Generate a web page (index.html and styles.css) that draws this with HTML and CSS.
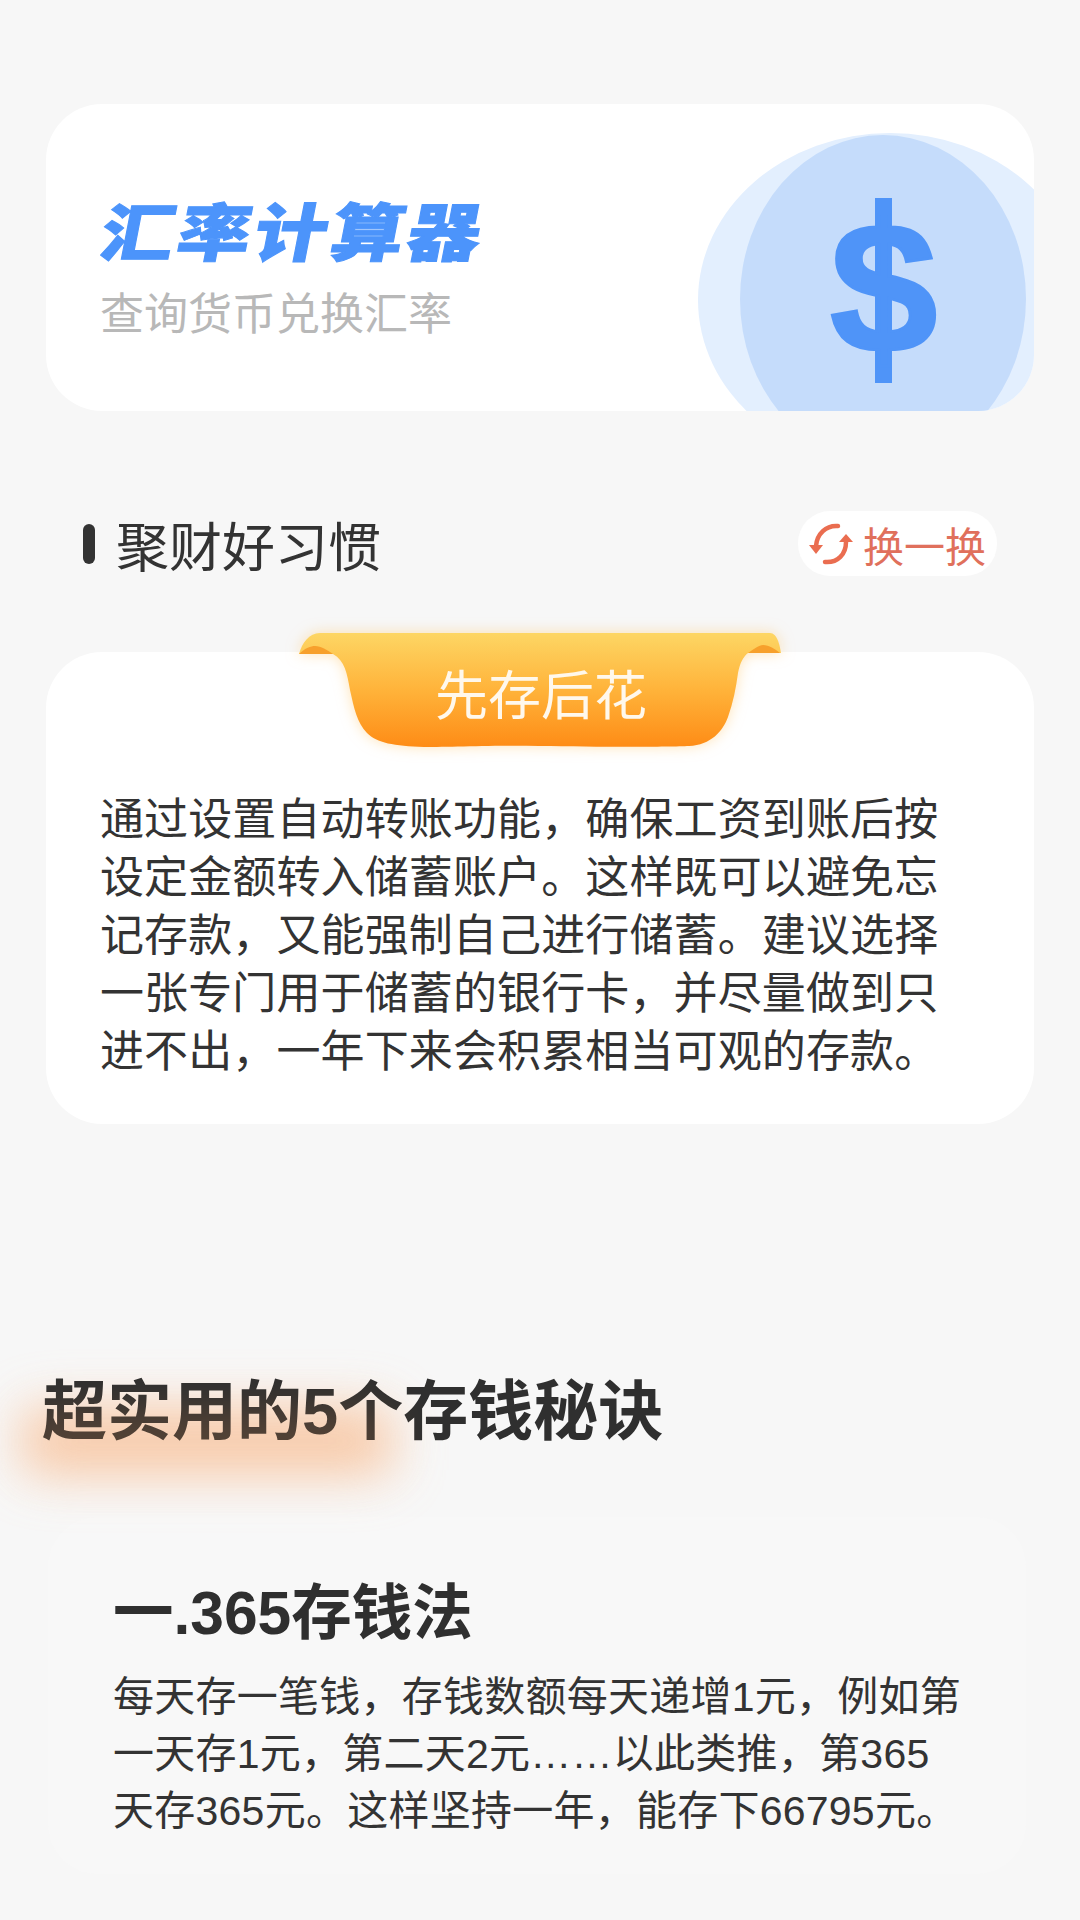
FILE: index.html
```html
<!DOCTYPE html>
<html lang="zh-CN">
<head>
<meta charset="utf-8">
<title>汇率计算器</title>
<link rel="stylesheet" href="styles.css">
</head>
<body>
<main class="page">
  <section class="promo">
    <div class="promo-copy">
      <h1 class="promo-title">汇率计算器</h1>
      <p class="promo-sub">查询货币兑换汇率</p>
    </div>
    <svg class="coin" viewBox="0 0 336 307" aria-hidden="true">
      <ellipse cx="192" cy="196" rx="192" ry="167" fill="#e3effe"/>
      <ellipse cx="185" cy="195" rx="143" ry="164" fill="#c5dcfb"/>
      <rect class="coin-bar" x="177" y="94" width="17" height="185"/>
      <text class="coin-mark" transform="translate(185.5 248) scale(.94 .9)" text-anchor="middle">$</text>
    </svg>
  </section>

  <header class="habit-head">
    <h2 class="habit-title">聚财好习惯</h2>
    <button class="swap" type="button">
      <svg class="swap-icon" viewBox="0 0 46 44" aria-hidden="true">
        <path class="swap-arc" d="M30 4C18 3 9 12 8 24"/>
        <path class="swap-tip" d="M1 23H15L8 32Z"/>
        <path class="swap-arc" d="M17 40C30 41 38 32 38 20"/>
        <path class="swap-tip" d="M31 20H45L38 12Z"/>
      </svg>
      换一换
    </button>
  </header>

  <section class="tip">
    <div class="ribbon">
      <svg class="ribbon-art" viewBox="0 0 484 116" aria-hidden="true">
        <defs>
          <linearGradient id="ribbonFill" x1="0" y1="0" x2="0" y2="1">
            <stop offset="0" stop-color="#fdd664"/>
            <stop offset="0.5" stop-color="#ffb33a"/>
            <stop offset="1" stop-color="#fe8c16"/>
          </linearGradient>
        </defs>
        <path d="M0 21C3 10 10 0 21 0H471C478 0 481 12 482 20H449C444 24 441 30 439 40C437 55 434 70 429 84C424 98 412 112 390 113C370 114 300 114 240 113C200 112 150 114 125 114C95 113 78 110 68 100C58 90 55 75 51 57C48 40 46 28 34 21Z" fill="url(#ribbonFill)"/>
        <path d="M0 21C6 15 12 13 16 13C22 13 28 17 34 21Z" fill="#f7a02c"/>
        <path d="M449 20C455 16 460 12 464 12C470 12 476 16 481 20Z" fill="#f7a02c"/>
      </svg>
      <span class="ribbon-label">先存后花</span>
    </div>
    <p class="tip-body">通过设置自动转账功能，确保工资到账后按<br>设定金额转入储蓄账户。这样既可以避免忘<br>记存款，又能强制自己进行储蓄。建议选择<br>一张专门用于储蓄的银行卡，并尽量做到只<br>进不出，一年下来会积累相当可观的存款。</p>
  </section>

  <h2 class="secrets-title"><span class="secrets-text">超实用的5个存钱秘诀</span></h2>

  <article class="method">
    <h3 class="method-title">一.365存钱法</h3>
    <p class="method-body">每天存一笔钱，存钱数额每天递增1元，例如第<br>一天存1元，第二天2元……以此类推，第365<br>天存365元。这样坚持一年，能存下66795元。</p>
  </article>
</main>
</body>
</html>
```
FILE: styles.css
```css
* { box-sizing: border-box; }

html, body {
  margin: 0;
  background: #f7f7f7;
}

body {
  width: 1080px;
  height: 1920px;
  overflow: hidden;
  font-family: "Liberation Sans", "Noto Sans CJK SC", sans-serif;
  color: #333;
}

h1, h2, h3, p { margin: 0; font-weight: 400; }

.page {
  display: flex;
  flex-direction: column;
  padding-top: 104px;
}

/* Calculator promo card */
.promo {
  position: relative;
  height: 307px;
  margin: 0 46px;
  padding: 90px 0 0 48px;
  background: #fff;
  border-radius: 56px;
  overflow: hidden;
}

.promo-title {
  font-size: 63px;
  line-height: 80px;
  font-weight: 900;
  letter-spacing: 3px;
  color: #4c94fb;
  -webkit-text-stroke: 1px #4c94fb;
  transform: skewX(-11deg) scaleX(1.16);
  transform-origin: 0 100%;
  white-space: nowrap;
}

.promo-sub {
  margin: 13px 0 0 6px;
  font-size: 44px;
  line-height: 56px;
  color: #b8b8b8;
}

.coin {
  position: absolute;
  top: 0;
  right: 0;
  width: 336px;
  height: 307px;
}

.coin-bar { fill: #4f94f8; }

.coin-mark {
  font-family: "Liberation Sans", sans-serif;
  font-weight: 700;
  font-size: 206px;
  fill: #4f94f8;
  stroke: #4f94f8;
  stroke-width: 3px;
}

/* Habit section heading */
.habit-head {
  display: flex;
  align-items: center;
  justify-content: space-between;
  height: 65px;
  margin: 100px 83px 0;
}

.habit-title {
  display: flex;
  align-items: center;
  gap: 21px;
  font-size: 53px;
  color: #333;
}

.habit-title::before {
  content: "";
  width: 12px;
  height: 40px;
  border-radius: 6px;
  background: #333;
}

.swap {
  display: flex;
  align-items: center;
  gap: 9px;
  width: 199px;
  height: 65px;
  padding: 0 0 0 10px;
  border: 0;
  border-radius: 32px;
  background: #fff;
  font: inherit;
  font-size: 41px;
  color: #e0705c;
}

.swap-icon { width: 46px; height: 44px; flex: none; }
.swap-arc { fill: none; stroke: #ea6d50; stroke-width: 4.5; stroke-linecap: round; }
.swap-tip { fill: #ea6d50; }

/* Tip card with ribbon */
.tip {
  position: relative;
  height: 472px;
  margin: 76px 46px 0;
  padding: 139px 54px 0;
  background: #fff;
  border-radius: 56px;
}

.ribbon {
  position: absolute;
  top: -19px;
  left: 253px;
  width: 484px;
  height: 116px;
  display: flex;
  justify-content: center;
  padding-top: 26px;
}

.ribbon-art {
  position: absolute;
  inset: 0;
  width: 484px;
  height: 116px;
  filter: drop-shadow(0 0 7px rgba(255, 200, 110, 0.5));
}

.ribbon-label {
  position: relative;
  font-size: 53px;
  line-height: 76px;
  color: #fff8ec;
}

.tip-body {
  font-size: 44px;
  line-height: 57.9px;
  letter-spacing: 0.12px;
  white-space: nowrap;
  color: #333;
}

/* Saving tips */
.secrets-title {
  isolation: isolate;
  margin: 243px 0 0 42px;
  font-size: 65px;
  line-height: 90px;
  font-weight: 700;
  color: #2f2f2f;
}

.secrets-text {
  position: relative;
  display: inline-block;
}

/* Soft peach highlight: one layer under the heading, a faint one over it */
.secrets-text::before,
.secrets-text::after {
  content: "";
  position: absolute;
  left: -18px;
  top: 44px;
  width: 366px;
  height: 60px;
  pointer-events: none;
}

.secrets-text::before {
  z-index: -1;
  background: #f9c39c;
  opacity: 0.7;
  filter: blur(28px);
}

.secrets-text::after {
  background: #f79a55;
  opacity: 0.2;
  filter: blur(22px);
}

.method {
  height: 357px;
  margin: 60px 54px 0 48px;
  padding: 61px 65px 0;
  background: #f8f8f8;
  border-radius: 50px;
}

.method-title {
  font-size: 60.5px;
  line-height: 70px;
  font-weight: 700;
  color: #2f2f2f;
  white-space: nowrap;
}

.method-body {
  margin-top: 21px;
  font-size: 41px;
  line-height: 57.2px;
  letter-spacing: 0.25px;
  white-space: nowrap;
  color: #333;
}
```
